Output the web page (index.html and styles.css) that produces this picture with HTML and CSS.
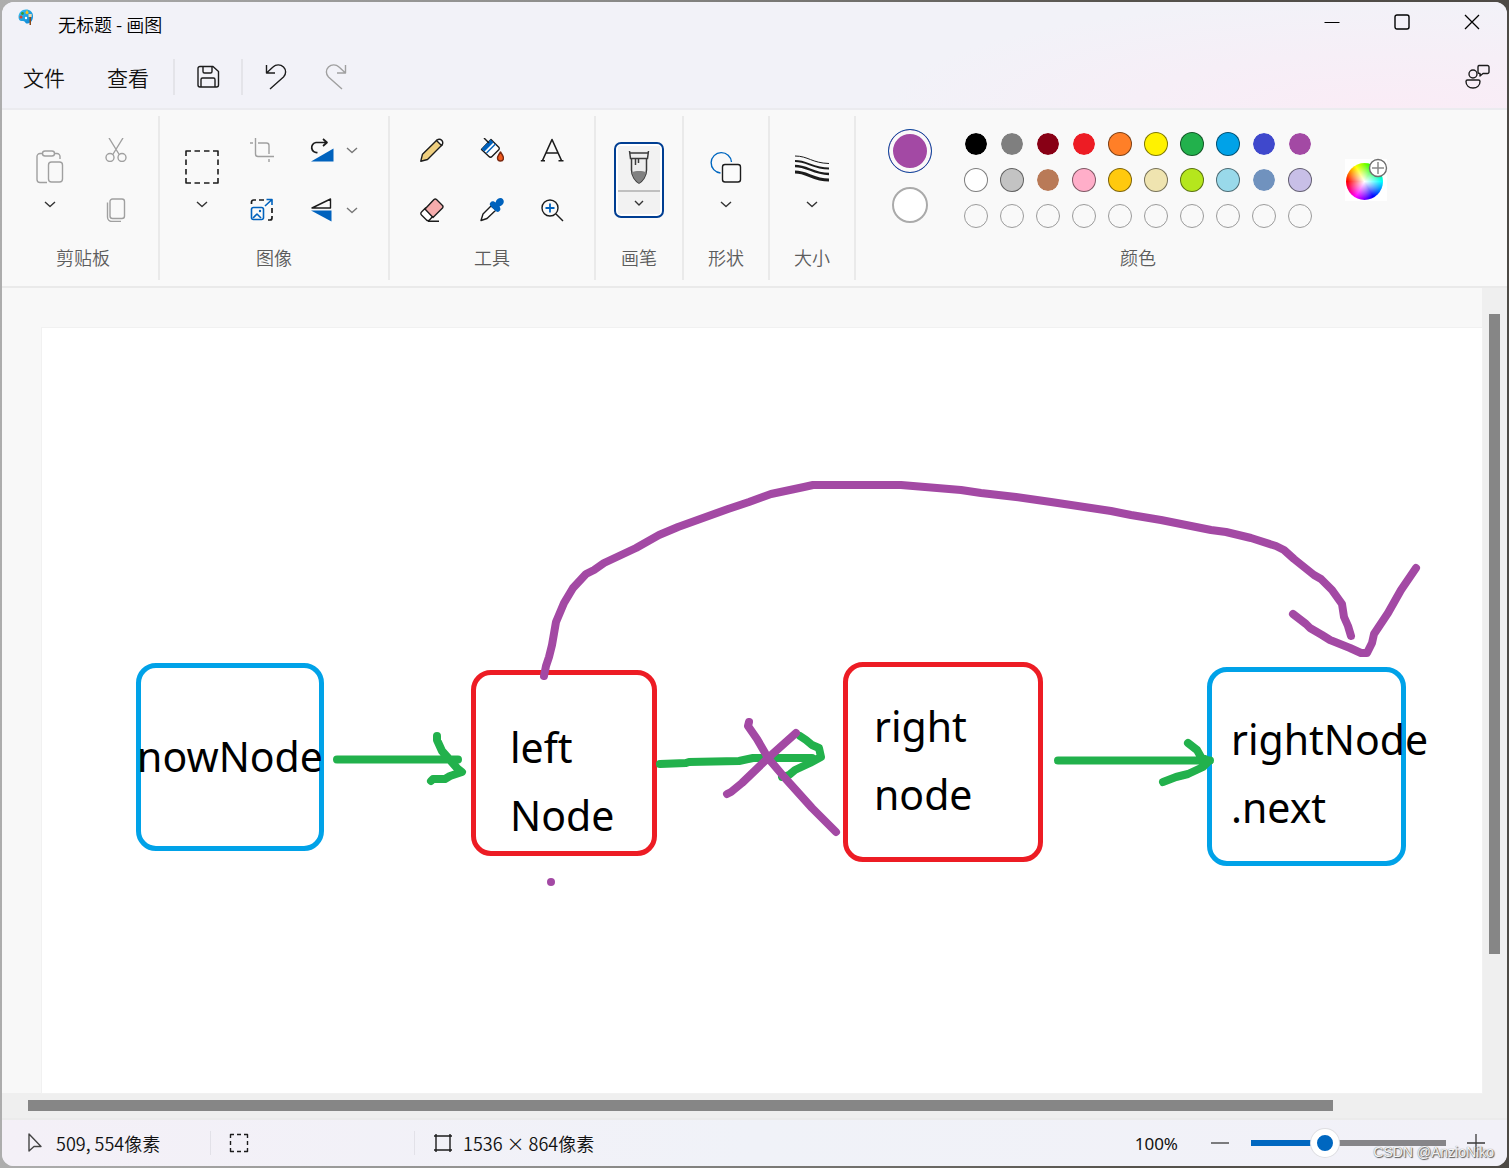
FILE: index.html
```html
<!DOCTYPE html>
<html lang="zh-CN">
<head>
<meta charset="utf-8">
<title>无标题 - 画图</title>
<link rel="stylesheet" href="styles.css">
</head>
<body>
<div class="window">
  <header class="header">
    <div class="titlebar">
      <svg class="app-icon" width="16" height="16" viewBox="0 0 16 16"><defs><linearGradient id="pal" x1="0" y1="0" x2="1" y2="1"><stop offset="0" stop-color="#35c5f5"/><stop offset="1" stop-color="#0b7fd0"/></linearGradient></defs><path d="M8 0.500C3.500 0.500 0.500 4 0.500 8c0 2.500 1.200 4 3 4 1.500 0 2-.5 3 .5 1 1.200 1.500 2.500 3.500 2 3.500-.8 5-4 5-7.500C15 3 12 .5 8 .5Z" fill="url(#pal)"/><circle cx="3" cy="8" r="1.500" fill="#d8432f"/><circle cx="4.500" cy="4.500" r="1.400" fill="#2f9a3c"/><path d="M7.500 3.500 9 1l1.500 2.500a1.500 1.500 0 1 1-3 0Z" fill="#f6c21c"/><circle cx="8" cy="9" r="1.200" fill="#fff"/><path d="M10.500 5h3.200v3h-3.200z" fill="#e8d9b0"/><path d="M11.500 8h1.500v8h-1.500z" fill="#8a4b1d"/></svg>
      <h1 class="title">无标题 - 画图</h1>
      <div class="window-controls">
        <button class="control" aria-label="最小化"><svg width="16" height="16" viewBox="0 0 16 16"><path d="M.5 8.500h15" stroke="#000"/></svg></button>
        <button class="control" aria-label="最大化"><svg width="16" height="16" viewBox="0 0 16 16"><rect x="1" y="1" width="14" height="14" rx="2" fill="none" stroke="#000" stroke-width="1.400"/></svg></button>
        <button class="control" aria-label="关闭"><svg width="16" height="16" viewBox="0 0 16 16"><path d="m1 1 14 14M15 1 1 15" stroke="#000" stroke-width="1.300"/></svg></button>
      </div>
    </div>
    <nav class="menubar">
      <button class="menu">文件</button>
      <button class="menu">查看</button>
      <span class="rule"></span>
      <button class="quick" aria-label="保存"><svg class="line" width="24" height="24" viewBox="0 0 24 24"><path d="M4 1.500h13L22.500 6.500V20a2 2 0 0 1-2 2H4a2 2 0 0 1-2-2V3.500a2 2 0 0 1 2-2ZM7 1.500v5a1.500 1.500 0 0 0 1.500 1.500h6A1.500 1.500 0 0 0 16 6.500v-5M5 22v-7.500A1.500 1.500 0 0 1 6.500 13h11a1.500 1.500 0 0 1 1.500 1.500V22"/></svg></button>
      <span class="rule"></span>
      <button class="quick" aria-label="撤消"><svg class="line" width="24" height="26" viewBox="0 0 24 26"><path d="M2.500 1v8h8.500M2.500 9l6.500-6a7.500 7.500 0 0 1 10.500 0 7 7 0 0 1 0 10L6 25"/></svg></button>
      <button class="quick quick-last" aria-label="重做"><svg class="line muted" width="24" height="26" viewBox="0 0 24 26"><path d="M21.500 1v8H13M21.500 9 15 3a7.500 7.500 0 0 0-10.500 0 7 7 0 0 0 0 10L18 25"/></svg></button>
      <button class="feedback" aria-label="反馈"><svg class="line" width="26" height="26" viewBox="0 0 26 26"><circle cx="9" cy="10" r="4"/><path d="M3.500 16h11a1.500 1.500 0 0 1 1.500 1.500c0 4-3 6.500-7 6.500s-7-2.500-7-6.500A1.500 1.500 0 0 1 3.500 16ZM15 1.500h8.500a1.500 1.500 0 0 1 1.500 1.500v5a1.500 1.500 0 0 1-1.500 1.500H19L16 12V9.500h-.5A1.500 1.500 0 0 1 14 8V3A1.500 1.500 0 0 1 15 1.500Z"/></svg></button>
    </nav>
  </header>

  <section class="ribbon">
    <div class="group group-clipboard">
      <div class="tools tools-clipboard">
        <button class="tall" aria-label="粘贴">
          <svg class="line muted" width="36" height="36" viewBox="0 0 36 36"><path d="M10.500 4.500H8a3 3 0 0 0-3 3v23a3 3 0 0 0 3 3h7M22.500 4.500H25a3 3 0 0 1 3 3v2.500"/><rect x="10.500" y="2" width="12" height="5" rx="2.500"/><rect x="16.500" y="13" width="14" height="20" rx="3"/></svg>
          <svg class="line chevron" width="12" height="12" viewBox="0 0 12 12"><path d="m1 4 5 4.500L11 4"/></svg>
        </button>
        <div class="stack">
          <button class="cell" aria-label="剪切"><svg class="line muted" width="24" height="24" viewBox="0 0 24 24"><path d="m5 0 10.500 17M19 0 8.500 17"/><circle cx="6" cy="19.500" r="4"/><circle cx="18" cy="19.500" r="4"/></svg></button>
          <button class="cell" aria-label="复制"><svg class="line muted" width="24" height="24" viewBox="0 0 24 24"><rect x="6" y="1" width="14.500" height="19.500" rx="2.500"/><path d="M3.500 4.500V19a4.500 4.500 0 0 0 4.500 4.500h9"/></svg></button>
        </div>
      </div>
      <h2 class="label">剪贴板</h2>
    </div>

    <div class="group group-image">
      <div class="tools">
        <button class="tall" aria-label="选择">
          <svg class="line" width="36" height="36" viewBox="0 0 36 36"><path stroke-width="1.600" d="M2 7V2h5M10.500 2H16M20 2h5.500M29 2h5v5M34 10.500V16M34 20v5.500M34 29v5h-5M25.500 34H20M16 34h-5.500M7 34H2v-5M2 25.500V20M2 16v-5.500"/></svg>
          <svg class="line chevron" width="12" height="12" viewBox="0 0 12 12"><path d="m1 4 5 4.500L11 4"/></svg>
        </button>
        <div class="stack">
          <button class="cell" aria-label="裁剪"><svg class="line muted" width="24" height="24" viewBox="0 0 24 24"><path d="M5.500 0v16a2.500 2.500 0 0 0 2.500 2.500h16M0 5h3M8 5h8.500A2.500 2.500 0 0 1 19 7.500V16M19 21v3"/></svg></button>
          <button class="cell" aria-label="调整大小"><svg class="line" width="24" height="24" viewBox="0 0 24 24"><path stroke-width="1.700" d="M1.500 6V4a2 2 0 0 1 2-2H6M9 2h5M22 10v5M22 18v2a2 2 0 0 1-2 2h-2"/><g stroke="#0062bd" stroke-width="1.600"><path d="m15 8 7-6.500M16.500 1.500H22V7M3 20l4-4 4 4"/><rect x="1.500" y="9.500" width="12" height="12" rx="2"/></g><circle cx="10" cy="13" r="1.200" fill="#0062bd" stroke="none"/></svg></button>
        </div>
        <div class="stack">
          <div class="split"><button class="icon" aria-label="旋转"><svg class="line" width="24" height="24" viewBox="0 0 24 24"><path stroke-width="1.700" d="M7.500 14.500A4.800 4.800 0 0 1 6 4.500h11M13 1l4 3.500L13 8"/><path d="M23.500 10.500v13H1Z" fill="#0062bd" stroke="none"/></svg></button><button class="icon" aria-label="旋转选项"><svg class="line chevron-soft" width="12" height="12" viewBox="0 0 12 12"><path d="m1 4 5 4.500L11 4"/></svg></button></div>
          <div class="split"><button class="icon" aria-label="翻转"><svg class="line" width="24" height="24" viewBox="0 0 24 24"><path d="M20.500 1v9H2Z"/><path d="M21.500 23.500V12.500H1Z" fill="#0062bd" stroke="none"/></svg></button><button class="icon" aria-label="翻转选项"><svg class="line chevron-soft" width="12" height="12" viewBox="0 0 12 12"><path d="m1 4 5 4.500L11 4"/></svg></button></div>
        </div>
      </div>
      <h2 class="label">图像</h2>
    </div>

    <div class="group group-tools">
      <div class="tools-grid">
        <button class="cell" aria-label="铅笔"><svg class="line" width="24" height="24" viewBox="0 0 24 24"><path fill="#efcf7f" d="m.8 23.200 1.700-7L17 2l5 5L7.500 21.500Z"/><path fill="#fff" d="m16.500 2.500 1.500-1a3.500 3.500 0 0 1 4.500 4.500l-1 1.500Z"/></svg></button>
        <button class="cell" aria-label="填充"><svg class="line" width="24" height="24" viewBox="0 0 24 24"><path fill="#fff" d="M11 1.500 19 9.500a2 2 0 0 1 0 2L12 18.500a2 2 0 0 1-3 0L1.500 11.500Z"/><path fill="#0062bd" stroke="none" d="m10.500 1.500 3 3L4.500 13.500 1.500 11Z"/><path stroke="#0062bd" stroke-width="1.400" d="m6.500 15 9-9"/><path d="m4 0 5 5"/><path stroke="#7b2a12" fill="#f25a1d" d="M20.500 14c2 3 3 4.500 3 6a3 3 0 0 1-6 0c0-1.500 1-3 3-6Z"/></svg></button>
        <button class="cell" aria-label="文本"><svg class="line" width="24" height="24" viewBox="0 0 24 24"><path stroke-width="1.600" d="M2.500 22.500 12 1.500l9.500 21M5.500 15h13M.8 22.700H5M18.500 22.700h5"/></svg></button>
        <button class="cell" aria-label="橡皮擦"><svg class="line" width="24" height="24" viewBox="0 0 24 24"><path fill="#fff" d="m5.500 10-4 4a2 2 0 0 0 0 3l5 5a2 2 0 0 0 3 0l3.500-4Z"/><path fill="#f5acac" d="m5 11 9-9.500a2 2 0 0 1 2.500 0l6 6a2 2 0 0 1 0 2.500L13 19.500Z"/><path d="M8 23.300h11"/></svg></button>
        <button class="cell" aria-label="颜色选取器"><svg class="line" width="24" height="24" viewBox="0 0 24 24"><path fill="#fff" d="M11 8 3 16l-2 6.500 6-2 9-8.500Z"/><path fill="#0062bd" stroke="none" d="M10.500 4.500c1.500-2 3.500-1 5 0C16.500 1 18.500 0 20.500 0c2 0 3.500 2 3.300 4-.3 2-2 3.500-4.300 4.500 1 2 1.500 3 0 4.500s-3 .8-4 0L10.500 8c-1-1-1-2.500 0-3.500Z"/></svg></button>
        <button class="cell" aria-label="放大镜"><svg class="line" width="24" height="24" viewBox="0 0 24 24"><circle cx="10" cy="10" r="8"/><path d="m16 16 7 7"/><path stroke="#0062bd" stroke-width="1.800" d="M10 5.500v9M5.500 10h9"/></svg></button>
      </div>
      <h2 class="label">工具</h2>
    </div>

    <div class="group group-brush">
      <div class="tools">
        <button class="brush" aria-label="画笔">
          <span class="brush-top"><svg width="24" height="36" viewBox="0 0 24 36"><path d="M4.500 9v11c0 6 4 11 7.500 13 3.500-2 7.500-7 7.500-13V9" fill="#eee" stroke="#3b3b3b" stroke-width="1.500"/><path d="M5 22c3-1.500 11-1.500 14 0-.5 5-4 9-7 11-3-2-6.500-6-7-11Z" fill="#828282"/><path d="M2.500 1l1 7.500h17L21.500 1" fill="#eee" stroke="#3b3b3b" stroke-width="1.500"/><path d="M3 3h18M8.500 9v6M11.500 9v4" stroke="#3b3b3b" stroke-width="1.500"/></svg></span>
          <span class="brush-bottom"><svg class="line chevron" width="12" height="12" viewBox="0 0 12 12"><path d="m2 4 4 4 4-4"/></svg></span>
        </button>
      </div>
      <h2 class="label">画笔</h2>
    </div>

    <div class="group group-narrow">
      <div class="tools">
        <button class="tall" aria-label="形状">
          <svg class="line" width="36" height="36" viewBox="0 0 36 36"><path stroke="#0067c0" d="M12.500 24A10.200 10.200 0 1 1 23.500 13"/><rect x="14.500" y="15.500" width="18" height="17.500" rx="2.500" fill="#fbfbfb"/></svg>
          <svg class="line chevron" width="12" height="12" viewBox="0 0 12 12"><path d="m1 4 5 4.500L11 4"/></svg>
        </button>
      </div>
      <h2 class="label">形状</h2>
    </div>

    <div class="group group-narrow">
      <div class="tools">
        <button class="tall" aria-label="大小">
          <svg class="line" width="36" height="36" viewBox="0 0 36 36"><path stroke-width="1" d="M1 7c13 0 17 7 34 7.500"/><path stroke-width="1.800" d="M1 12c13 0 17 7.500 34 7.500"/><path stroke-width="2.300" d="M1 17c13 0 17 7.500 34 8"/><path stroke-width="3" d="M1 23c13 0 17 8 34 8"/></svg>
          <svg class="line chevron" width="12" height="12" viewBox="0 0 12 12"><path d="m1 4 5 4.500L11 4"/></svg>
        </button>
      </div>
      <h2 class="label">大小</h2>
    </div>

    <div class="group group-colors">
      <div class="colors">
        <div class="active-colors">
          <button class="color-one" aria-label="颜色 1"></button>
          <button class="color-two" aria-label="颜色 2"></button>
        </div>
        <div class="palette">
          <button class="swatch black" aria-label="黑色"></button>
          <button class="swatch gray" aria-label="灰色"></button>
          <button class="swatch dark-red" aria-label="深红色"></button>
          <button class="swatch red" aria-label="红色"></button>
          <button class="swatch rim orange" aria-label="橙色"></button>
          <button class="swatch rim yellow" aria-label="黄色"></button>
          <button class="swatch rim green" aria-label="绿色"></button>
          <button class="swatch rim turquoise" aria-label="青绿色"></button>
          <button class="swatch indigo" aria-label="靛蓝色"></button>
          <button class="swatch purple" aria-label="紫色"></button>
          <button class="swatch rim white" aria-label="白色"></button>
          <button class="swatch rim light-gray" aria-label="浅灰色"></button>
          <button class="swatch brown" aria-label="褐色"></button>
          <button class="swatch rim rose" aria-label="玫瑰色"></button>
          <button class="swatch rim gold" aria-label="金色"></button>
          <button class="swatch rim light-yellow" aria-label="浅黄色"></button>
          <button class="swatch rim lime" aria-label="酸橙色"></button>
          <button class="swatch rim light-turquoise" aria-label="淡青绿色"></button>
          <button class="swatch blue-gray" aria-label="蓝灰色"></button>
          <button class="swatch rim lavender" aria-label="淡紫色"></button>
          <button class="swatch empty" aria-label="自定义 1"></button>
          <button class="swatch empty" aria-label="自定义 2"></button>
          <button class="swatch empty" aria-label="自定义 3"></button>
          <button class="swatch empty" aria-label="自定义 4"></button>
          <button class="swatch empty" aria-label="自定义 5"></button>
          <button class="swatch empty" aria-label="自定义 6"></button>
          <button class="swatch empty" aria-label="自定义 7"></button>
          <button class="swatch empty" aria-label="自定义 8"></button>
          <button class="swatch empty" aria-label="自定义 9"></button>
          <button class="swatch empty" aria-label="自定义 10"></button>
        </div>
        <button class="edit-colors" aria-label="编辑颜色">
          <span class="wheel"></span>
          <svg class="plus-badge" width="20" height="20" viewBox="0 0 20 20"><circle cx="10" cy="10" r="8.500" fill="#fff" stroke="#6e6e6e" stroke-width="1.400"/><path d="M10 4v12M4 10h12" stroke="#8a8a8a" stroke-width="1.500"/></svg>
        </button>
      </div>
      <h2 class="label">颜色</h2>
    </div>
  </section>

  <main class="workspace">
    <div class="viewport">
      <div class="canvas">
        <div class="node blue node-now">nowNode</div>
        <div class="node red-line node-left">left<br>Node</div>
        <div class="node red-line node-right">right<br>node</div>
        <div class="node blue node-next">rightNode<br>.next</div>
        <svg class="strokes" width="1440" height="765" viewBox="42 328 1440 765">
          <g class="green-stroke">
            <path d="M337 759.500H458M437 736v4l5 11 8 9 7 8 5 4-12 4-5 3h-12l-2 2"/>
            <path d="M660 764l26-1 3-1 50-1 14-3H812M800 736l6 4 6 5 7 3 2 9-11 6-15 7-6 5-7 2"/>
            <path d="M1058 760.500H1210M1188 743l9 7 4 7 8 4-6 6-15 7-12 3-13 5"/>
          </g>
          <g class="purple-stroke">
            <path d="M544 676l2-10 3-9 3-12 4-23 8-19 9-15 13-14 8-4 10-7 32-15 23-13 19-8 50-18 21-7 22-8 33-7 9-2h88l60 5 20 3 35 4 35 5 60 9 20 4 30 5 50 10 15 2 25 6 25 8 8 4 10 9 20 16 7 4 11 11 10 14 2 13 4 9 3 10"/>
            <path d="M1293 614l13 10 4 4 12 7 8 5 20 8 11 5h6l5-10 2-9 14-21 13-23 15-22"/>
            <path d="M749 722l-1 4 9 13 11 19 17 20 27 30 24 24M796 733l-28 25-26 25-11 9-4 2"/>
          </g>
          <circle cx="551" cy="882" r="4" fill="#a349a4"/>
        </svg>
      </div>
    </div>
    <div class="scroll-y"><div class="thumb"></div></div>
    <div class="scroll-x"><div class="thumb"></div></div>
  </main>

  <footer class="status">
    <div class="status-item">
      <svg class="line" width="18" height="20" viewBox="0 0 18 20"><path stroke="#444" d="M2 1v17l5-4.500h7Z"/></svg>
      <span>509, 554像素</span>
    </div>
    <div class="status-item">
      <svg class="line" width="20" height="20" viewBox="0 0 20 20"><path d="M1.500 5V1.500H5M8 1.500h4M15 1.500h3.500V5M18.500 8v4M18.500 15v3.500H15M12 18.500H8M5 18.500H1.500V15M1.500 12V8"/></svg>
    </div>
    <div class="status-item status-size">
      <svg class="line" width="20" height="20" viewBox="0 0 20 20"><path d="M3 1v18M17 1v18M1 3h18M1 17h18"/></svg>
      <span>1536 × 864像素</span>
    </div>
    <div class="zoom">
      <label class="zoom-value" for="zoom">100%</label>
      <button class="icon" aria-label="缩小"><svg width="18" height="18" viewBox="0 0 18 18"><path d="M0 9h18" stroke="#3a3a3a" stroke-width="1.300"/></svg></button>
      <input class="slider" id="zoom" type="range" min="0" max="100" value="36">
      <button class="icon" aria-label="放大"><svg width="18" height="18" viewBox="0 0 18 18"><path d="M0 9h18M9 0v18" stroke="#3a3a3a" stroke-width="1.300"/></svg></button>
    </div>
  </footer>
</div>
<div class="watermark">CSDN @AnzioNiko</div>
</body>
</html>
```
FILE: styles.css
```css
* { box-sizing: border-box; }

body {
  margin: 0;
  min-height: 100vh;
  padding: 2px;
  display: flex;
  background: linear-gradient(90deg, #adadad, #8b8b89 40%, #55524c 75%, #4d4a45);
  font-family: "Noto Sans CJK SC", "Noto Sans", sans-serif;
  font-size: 18px;
  font-weight: 350;
  color: #111;
}

button {
  margin: 0;
  padding: 0;
  border: 0;
  background: none;
  font: inherit;
  color: inherit;
}

svg { display: block; flex: none; }

.line {
  fill: none;
  stroke: #1c1c1c;
  stroke-width: 1.4;
  stroke-linejoin: round;
}
.muted { stroke: #a0a0a0; }
.chevron { stroke: #333; }
.chevron-soft { stroke: #777; }

.window {
  flex: 1;
  min-width: 0;
  display: flex;
  flex-direction: column;
  border-radius: 12px;
  overflow: hidden;
  background: #f2f2f8;
}

/* Title bar and menu */
.header {
  border-bottom: 2px solid #ebebef;
  background: radial-gradient(ellipse 500px 110px at 92% 100%, #faecf6, #f2f2f8);
}
.titlebar {
  display: flex;
  align-items: center;
  height: 44px;
  padding-left: 16px;
}
.app-icon { align-self: flex-start; margin-top: 7px; }
.title {
  flex: 1;
  margin: 0 0 0 24px;
  font-size: 18px;
  line-height: 24px;
  font-weight: 350;
  color: #000;
}
.window-controls { display: flex; align-self: flex-start; }
.control {
  width: 70px;
  height: 40px;
  display: grid;
  place-items: center;
}

.menubar {
  display: flex;
  align-items: center;
  height: 62px;
  padding: 0 17px 0 21px;
}
.menu {
  font-size: 21px;
  line-height: 32px;
  margin-right: 42px;
}
.menu + .menu { margin-right: 24px; }
.rule { width: 2px; height: 36px; background: #e4e4e9; }
.quick {
  width: 66px;
  height: 40px;
  display: grid;
  place-items: center;
}
.quick-last { width: 54px; }
.feedback { margin-left: auto; }

/* Ribbon */
.ribbon {
  display: flex;
  padding: 6px 0;
  background: #f9f9f9;
  border-bottom: 2px solid #eaeaea;
}
.group {
  display: flex;
  flex-direction: column;
  align-items: center;
  height: 164px;
  padding-top: 4px;
  border-right: 2px solid #eaeaea;
}
.group-clipboard { width: 158px; padding-left: 6px; }
.group-image { width: 230px; }
.group-tools { width: 206px; }
.group-brush { width: 88px; }
.group-narrow { width: 86px; }
.group-colors { width: 564px; border-right: 0; }

.label {
  margin: 0;
  font-size: 18px;
  line-height: 34px;
  font-weight: 350;
  color: #5c5c5c;
}

.tools { display: flex; height: 120px; }
.tools-clipboard { gap: 6px; }
.tools-grid { display: grid; grid-template-columns: repeat(3, 60px); }
.tall {
  width: 60px;
  display: flex;
  flex-direction: column;
  align-items: center;
  justify-content: flex-start;
  gap: 13px;
  padding-top: 29px;
}
.stack { display: flex; flex-direction: column; }
.cell {
  width: 60px;
  height: 60px;
  display: grid;
  place-items: center;
}
.split {
  display: flex;
  align-items: center;
  gap: 12px;
  width: 84px;
  height: 60px;
  padding-left: 18px;
}
.brush {
  align-self: center;
  display: flex;
  flex-direction: column;
  width: 50px;
  height: 76px;
  padding: 2px;
  border: 2px solid #003e92;
  border-radius: 7px;
  background: #fff;
}
.brush-top, .brush-bottom {
  display: grid;
  place-items: center;
  background: #f2f2f2;
}
.brush-top { flex: 1; border-bottom: 2px solid #c0c0c0; }
.brush-bottom { height: 22px; }

.colors {
  display: flex;
  align-self: stretch;
  height: 120px;
  padding-left: 32px;
}
.active-colors {
  display: flex;
  flex-direction: column;
  align-items: center;
  gap: 14px;
  width: 44px;
  padding-top: 9px;
  margin-right: 26px;
}
.color-one {
  width: 44px;
  height: 44px;
  border: 1px solid #0c479c;
  border-radius: 50%;
  background: #a349a4;
  box-shadow: inset 0 0 0 4px #f9f9f9;
}
.color-two {
  width: 36px;
  height: 36px;
  border: 2px solid #aaa;
  border-radius: 50%;
  background: #fff;
}
.palette {
  display: grid;
  grid-template-columns: repeat(10, 36px);
  grid-auto-rows: 36px;
  place-items: center;
  padding-top: 6px;
}
.swatch { width: 24px; height: 24px; border-radius: 50%; border: 1px solid #f9f9f9; background-clip: padding-box; }
.rim { border-color: #00000080; background-clip: border-box; }
.empty { border-color: #9b9b9b; }
.black { background-color: #000; }
.gray { background-color: #7f7f7f; }
.dark-red { background-color: #880015; }
.red { background-color: #ed1c24; }
.orange { background-color: #ff7f27; }
.yellow { background-color: #fff200; }
.green { background-color: #22b14c; }
.turquoise { background-color: #00a2e8; }
.indigo { background-color: #3f48cc; }
.purple { background-color: #a349a4; }
.white { background-color: #fff; }
.light-gray { background-color: #c3c3c3; }
.brown { background-color: #b97a57; }
.rose { background-color: #ffaec9; }
.gold { background-color: #ffc90e; }
.light-yellow { background-color: #efe4b0; }
.lime { background-color: #b5e61d; }
.light-turquoise { background-color: #99d9ea; }
.blue-gray { background-color: #7092be; }
.lavender { background-color: #c8bfe7; }

.edit-colors {
  position: relative;
  width: 42px;
  height: 42px;
  margin: 39px 0 0 27px;
  background: #fff;
}
.wheel {
  display: block;
  width: 37px;
  height: 37px;
  margin: 2px 0 0 1px;
  border-radius: 50%;
  background:
    radial-gradient(circle, #fff, #ffffff00 65%),
    conic-gradient(from 30deg, lime, cyan, blue, magenta, red, yellow, lime);
}
.plus-badge { position: absolute; top: -1px; right: -1px; }

/* Drawing area */
.workspace {
  flex: 1;
  display: grid;
  grid-template-columns: 1fr 25px;
  grid-template-rows: 1fr 25px;
  background: #efefef;
}
.viewport {
  display: flex;
  min-width: 0;
  padding: 40px 0 0 40px;
  background: #f8f8f8;
}
.canvas {
  position: relative;
  flex: 1;
  min-width: 0;
  min-height: 640px;
  overflow: hidden;
  background: #fff;
  outline: 1px solid #f1f1f1;
}
.scroll-y { display: flex; padding: 26px 7px 0; grid-row: 1 / 3; grid-column: 2; }
.scroll-y .thumb { flex: 1; margin-bottom: 164px; }
.scroll-x { padding: 7px 0 0 26px; grid-row: 2; grid-column: 1; }
.scroll-x .thumb { height: 11px; margin-right: 149px; }
.thumb { background: #868686; }

.node {
  position: absolute;
  border: 5px solid;
  border-radius: 20px;
  font-family: "Noto Sans", sans-serif;
  font-size: 41px;
  font-weight: 400;
  line-height: 68px;
  white-space: nowrap;
  color: #000;
}
.blue { border-color: #00a2e8; }
.red-line { border-color: #ed1c24; }
.node-now {
  left: 94px;
  top: 335px;
  width: 188px;
  height: 188px;
  padding-top: 54px;
  display: flex;
  justify-content: center;
}
.node-left { left: 429px; top: 342px; width: 186px; height: 186px; padding: 38px 0 0 34px; }
.node-right { left: 801px; top: 334px; width: 200px; height: 200px; padding: 25px 0 0 26px; }
.node-next { left: 1165px; top: 339px; width: 199px; height: 199px; padding: 33px 0 0 19px; }

.strokes { position: absolute; left: 0; top: 0; }
.strokes g { fill: none; stroke-width: 8; stroke-linecap: round; stroke-linejoin: round; }
.green-stroke { stroke: #22b14c; }
.purple-stroke { stroke: #a349a4; }

/* Status bar */
.status {
  display: flex;
  align-items: center;
  height: 48px;
  border-top: 2px solid #ebebeb;
  background: linear-gradient(90deg, #f4f0f7, #f0f2f8 50%, #f2f1f8);
}
.status-item {
  display: flex;
  align-items: center;
  gap: 11px;
  width: 209px;
  height: 24px;
  padding-left: 25px;
  border-right: 1px solid #e2e1e8;
}
.status-item + .status-item { width: 204px; padding-left: 18px; }
.status-item.status-size { width: auto; gap: 10px; border-right: 0; }
.zoom {
  display: flex;
  align-items: center;
  margin-left: auto;
  padding-right: 22px;
}
.zoom-value {
  margin-right: 33px;
  font-family: "Noto Sans", sans-serif;
  font-size: 17px;
  font-weight: 400;
}
.slider {
  appearance: none;
  width: 195px;
  height: 32px;
  margin: 0 21px 0 22px;
  border-radius: 3px;
  background: linear-gradient(90deg, #0067c0 38%, #868589 38%) center / 100% 6px no-repeat;
}
.slider::-webkit-slider-thumb {
  appearance: none;
  width: 28px;
  height: 28px;
  border: 6px solid #fff;
  border-radius: 50%;
  background: #0067c0;
  box-shadow: 0 0 0 1px #dedee2;
}

.watermark {
  position: absolute;
  right: 15px;
  bottom: 6px;
  font: 14px/20px "Liberation Sans", sans-serif;
  color: #f4f4f4;
  text-shadow: 1px 1px 1px #555, 0 0 1px #666;
}
```
